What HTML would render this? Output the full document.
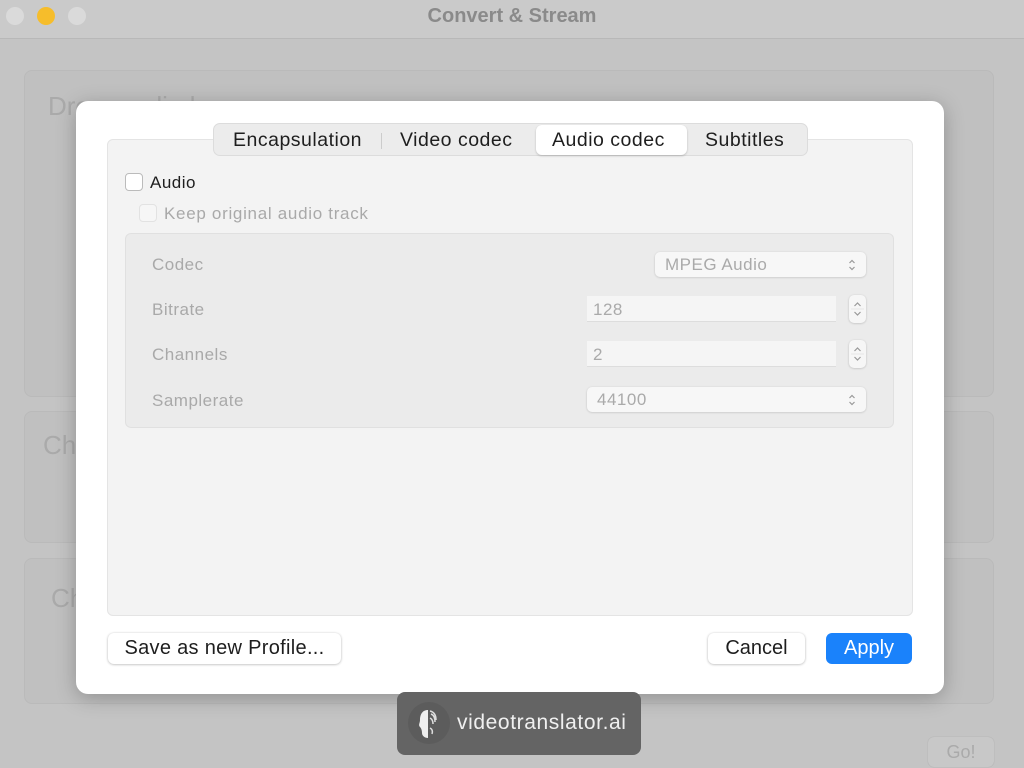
<!DOCTYPE html>
<html><head><style>
*{box-sizing:border-box;margin:0;padding:0}
body{width:1024px;height:768px;overflow:hidden;background:#c4c4c4;font-family:"Liberation Sans",sans-serif;position:relative}
.abs{position:absolute}
.tb{left:0;top:0;width:1024px;height:39px;background:#cacaca;border-bottom:1px solid #b8b8b8}
.dot{width:18px;height:18px;border-radius:50%;top:7px;background:#dadada}
.panel{background:#c0c0c0;border:1px solid #bababa;border-radius:8px;left:24px;width:970px}
.ph{color:#aaa;font-size:26px}
.dlg{left:76px;top:101px;width:868px;height:593px;background:#fff;border-radius:12px;box-shadow:0 4px 20px rgba(0,0,0,.25)}
.inner{left:31px;top:38px;width:806px;height:477px;background:#f3f3f3;border:1px solid #e4e4e4;border-radius:6px}
.tabs{left:137px;top:22px;width:595px;height:33px;background:#ececec;border:1px solid #dcdcdc;border-radius:7px;font-size:19.5px;color:#1e1e1e;letter-spacing:0.5px}
.tab{position:absolute;top:5px}
.sel{position:absolute;left:322px;top:1px;width:151px;height:30px;background:#fff;border-radius:6px;box-shadow:0 1px 2px rgba(0,0,0,.2)}
.cb{width:18px;height:18px;border:1px solid #bbb;border-radius:4px;background:#fff}
.grp{left:49px;top:132px;width:769px;height:195px;background:#ebebeb;border:1px solid #e0e0e0;border-radius:6px}
.lbl{color:#a9a9a9;font-size:17px;letter-spacing:0.5px}
.fld{background:#f5f5f5;border-bottom:1px solid #ddd;height:26px;color:#aaa;font-size:17px;padding:4px 6px;letter-spacing:0.5px}
.pop{background:#f7f7f7;border-radius:5px;box-shadow:0 0.5px 2px rgba(0,0,0,.18);height:25px;color:#aaa;font-size:17px;padding:3px 10px;letter-spacing:0.5px}
.btn{background:#fff;border-radius:6px;box-shadow:0 0.5px 2.5px rgba(0,0,0,.3);height:31px;font-size:20px;color:#1e1e1e;text-align:center;line-height:31px}
.step{width:17px;height:28px;border-radius:5px;background:#f6f6f6;box-shadow:0 0.5px 2px rgba(0,0,0,.2)}
</style></head><body>
<div class="abs tb"></div>
<div class="abs dot" style="left:6px"></div>
<div class="abs dot" style="left:37px;background:#f6bd2b"></div>
<div class="abs dot" style="left:68px"></div>
<div class="abs" style="left:0;width:1024px;top:5px;text-align:center;font-size:20px;font-weight:bold;color:#8a8a8a">Convert &amp; Stream</div>
<div class="abs panel" style="top:70px;height:327px"><div class="abs ph" style="left:23px;top:20px">Drop media here</div></div>
<div class="abs panel" style="top:411px;height:132px"><div class="abs ph" style="left:18px;top:18px">Ch</div></div>
<div class="abs panel" style="top:558px;height:146px"><div class="abs ph" style="left:26px;top:24px">Ch</div></div>
<div class="abs btn" style="left:928px;top:737px;width:66px;height:30px;background:#c8c8c8;color:#aaa;font-size:18px;box-shadow:0 0 1px rgba(0,0,0,.2)">Go!</div>

<div class="abs dlg">
 <div class="abs inner"></div>
 <div class="abs tabs">
  <div class="sel"></div>
  <span class="tab" style="left:19px">Encapsulation</span>
  <span class="abs" style="left:167px;top:9px;width:1px;height:16px;background:#ccc"></span>
  <span class="tab" style="left:186px">Video codec</span>
  <span class="tab" style="left:338px">Audio codec</span>
  <span class="tab" style="left:491px">Subtitles</span>
 </div>
 <div class="abs cb" style="left:49px;top:72px"></div>
 <div class="abs" style="left:74px;top:72px;font-size:17px;color:#1e1e1e;letter-spacing:0.5px">Audio</div>
 <div class="abs cb" style="left:63px;top:103px;border-color:#e2e2e2;background:#f6f6f6"></div>
 <div class="abs lbl" style="left:88px;top:103px;letter-spacing:0.7px">Keep original audio track</div>
 <div class="abs grp"></div>
 <div class="abs lbl" style="left:76px;top:154px">Codec</div>
 <div class="abs lbl" style="left:76px;top:199px">Bitrate</div>
 <div class="abs lbl" style="left:76px;top:244px">Channels</div>
 <div class="abs lbl" style="left:76px;top:290px">Samplerate</div>
 <div class="abs pop" style="left:579px;top:151px;width:211px">MPEG Audio</div>
 <div class="abs fld" style="left:511px;top:195px;width:249px">128</div>
 <div class="abs step" style="left:773px;top:194px"><svg width="17" height="28"><path d="M5.5 11L8.5 8L11.5 11M5.5 17L8.5 20L11.5 17" stroke="#999" stroke-width="1.2" fill="none"/><line x1="2" y1="14" x2="15" y2="14" stroke="#e6e6e6"/></svg></div>
 <div class="abs fld" style="left:511px;top:240px;width:249px">2</div>
 <div class="abs step" style="left:773px;top:239px"><svg width="17" height="28"><path d="M5.5 11L8.5 8L11.5 11M5.5 17L8.5 20L11.5 17" stroke="#999" stroke-width="1.2" fill="none"/><line x1="2" y1="14" x2="15" y2="14" stroke="#e6e6e6"/></svg></div>
 <div class="abs pop" style="left:511px;top:286px;width:279px">44100</div>
 <svg class="abs" style="left:771px;top:157px" width="10" height="14"><path d="M2.5 5L5 2.5L7.5 5M2.5 9L5 11.5L7.5 9" stroke="#999" stroke-width="1.2" fill="none"/></svg>
 <svg class="abs" style="left:771px;top:292px" width="10" height="14"><path d="M2.5 5L5 2.5L7.5 5M2.5 9L5 11.5L7.5 9" stroke="#999" stroke-width="1.2" fill="none"/></svg>
 <div class="abs btn" style="left:32px;top:532px;width:233px;letter-spacing:0.3px">Save as new Profile...</div>
 <div class="abs btn" style="left:632px;top:532px;width:97px">Cancel</div>
 <div class="abs btn" style="left:750px;top:532px;width:86px;background:#1a82fb;color:#fff;box-shadow:none">Apply</div>
</div>

<div class="abs" style="left:397px;top:692px;width:244px;height:63px;background:#646464;border-radius:8px"></div>
<div class="abs" style="left:408px;top:702px;width:42px;height:42px;border-radius:50%;background:#5c5c5c"></div>
<svg class="abs" style="left:416px;top:708px" width="26" height="32" viewBox="0 0 26 32"><path d="M12 2C6 2 4 7 4 12c0 3-2 5 0 7 1 1 2 3 2 6 0 3 3 5 6 5z" fill="#eee"/><path d="M14 3c4 1 6 4 6 9M15 6c3 1 4 4 4 8M14 10c2 1 3 3 3 6M14 20c2 1 3 3 2 6" stroke="#ddd" stroke-width="1.5" fill="none"/></svg>
<div class="abs" style="left:457px;top:711px;font-size:21px;color:#f0f0f0;letter-spacing:0.6px">videotranslator.ai</div>
</body></html>
